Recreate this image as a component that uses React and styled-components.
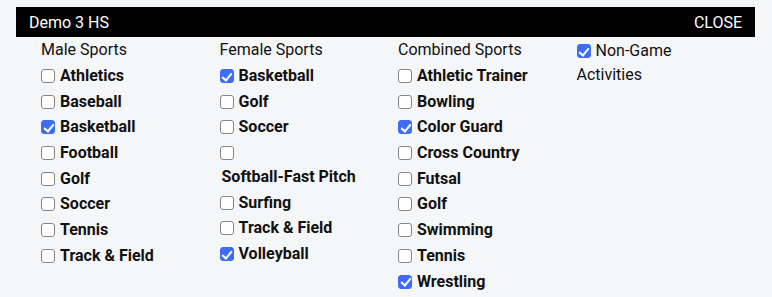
import React from 'react'
import styled, { createGlobalStyle } from 'styled-components'

const GlobalStyle = createGlobalStyle`
   html, body {
      margin: 0;
      background: #f5f6f8;
      font-family: Roboto, "Liberation Sans", Arial, sans-serif;
      color: #111;
   }
`

const groups = [
   {
      title: 'Male Sports',
      items: [
         ['Athletics', false],
         ['Baseball', false],
         ['Basketball', true],
         ['Football', false],
         ['Golf', false],
         ['Soccer', false],
         ['Tennis', false],
         ['Track & Field', false],
      ],
   },
   {
      title: 'Female Sports',
      items: [
         ['Basketball', true],
         ['Golf', false],
         ['Soccer', false],
         ['Softball-Fast Pitch', false],
         ['Surfing', false],
         ['Track & Field', false],
         ['Volleyball', true],
      ],
   },
   {
      title: 'Combined Sports',
      items: [
         ['Athletic Trainer', false],
         ['Bowling', false],
         ['Color Guard', true],
         ['Cross Country', false],
         ['Futsal', false],
         ['Golf', false],
         ['Swimming', false],
         ['Tennis', false],
         ['Wrestling', true],
      ],
   },
]

const Check = ({ checked, plain, children }) => (
   <Item plain={plain ? 1 : 0}>
      <Box type="checkbox" defaultChecked={checked} />
      <Text plain={plain ? 1 : 0}>{children}</Text>
   </Item>
)

const App = () => {
   return (
      <Page>
         <GlobalStyle />
         <Header>
            <span>Demo 3 HS</span>
            <span>CLOSE</span>
         </Header>
         <Columns>
            {groups.map(g => (
               <Column key={g.title}>
                  <Heading>{g.title}</Heading>
                  {g.items.map(([name, on]) => (
                     <Check key={name} checked={on}>{name}</Check>
                  ))}
               </Column>
            ))}
            <Column>
               <Check checked plain>Non-Game Activities</Check>
            </Column>
         </Columns>
      </Page>
   )
}

const Page = styled.div`
   padding: 7px 17px 0 16px;
`

const Header = styled.div`
   height: 30px;
   background: #000;
   color: #fff;
   display: flex;
   align-items: center;
   justify-content: space-between;
   padding: 0 13px;
   font-size: 16px;
`

const Columns = styled.div`
   display: grid;
   grid-template-columns: repeat(4, 178.5px);
   padding-left: 25px;
   padding-top: 2px;
`

const Column = styled.div`
   display: flex;
   flex-direction: column;
   align-items: flex-start;
`

const Heading = styled.div`
   font-size: 16px;
   line-height: 22px;
   margin-bottom: 3px;
`

const Item = styled.label`
   display: block;
   max-width: 145px;
   font-size: 16px;
   line-height: 24px;
   padding-bottom: 1.7px;
   font-weight: ${p => (p.plain ? 400 : 700)};
`

const Text = styled.span`
   display: ${p => (p.plain ? 'inline' : 'inline-block')};
   padding-left: 2px;
`

const Box = styled.input`
   appearance: none;
   -webkit-appearance: none;
   width: 14px;
   height: 14px;
   margin: 0 3px 0 0;
   box-sizing: border-box;
   border: 1px solid #858585;
   border-radius: 3px;
   background: #fff;
   vertical-align: -2px;
   position: relative;
   &:checked {
      background: #3d6cf5;
      border-color: #3d6cf5;
   }
   &:checked::after {
      content: '';
      position: absolute;
      left: 3.5px;
      top: 0.5px;
      width: 4px;
      height: 8px;
      border: solid #fff;
      border-width: 0 2px 2px 0;
      transform: rotate(40deg);
   }
`

export default App
